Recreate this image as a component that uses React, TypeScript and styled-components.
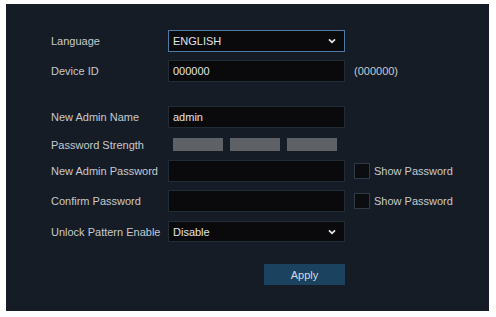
import React from "react";
import styled, { createGlobalStyle } from "styled-components";

const Global = createGlobalStyle`
  html, body { margin: 0; padding: 0; background: #ffffff; }
  body { font-family: "Liberation Sans", Arial, sans-serif; }
`;

const Panel = styled.div`
  margin: 4px 0 0 6px;
  width: 483px;
  height: 307px;
  background: #151c25;
  box-sizing: border-box;
  padding: 26px 0 0 45px;
  display: flex;
  flex-direction: column;
`;

const Row = styled.div<{ $top: number; $h?: number }>`
  display: flex;
  align-items: center;
  margin-top: ${(p) => p.$top}px;
  height: ${(p) => p.$h ?? 22}px;
`;

const Label = styled.div`
  width: 117px;
  font-size: 11px;
  color: #c6cacf;
  white-space: nowrap;
`;

const Field = styled.div<{ $focus?: boolean }>`
  width: 177px;
  height: 100%;
  box-sizing: border-box;
  background: #0a0a0c;
  border: 1px solid ${(p) => (p.$focus ? "#4d7ba6" : "#222c37")};
  display: flex;
  align-items: center;
  justify-content: space-between;
  padding: 0 8px 0 4px;
  font-size: 11px;
  color: #e0e3e6;
`;

const Chevron = () => (
  <svg width="8" height="6" viewBox="0 0 8 6">
    <path d="M1 1.3 L4 4.3 L7 1.3" fill="none" stroke="#e2e5e8" strokeWidth="1.8" />
  </svg>
);

const Side = styled.div`
  margin-left: 9px;
  font-size: 11px;
  color: #c6cacf;
  display: flex;
  align-items: center;
  gap: 4px;
`;

const Check = styled.div`
  width: 16px;
  height: 16px;
  box-sizing: border-box;
  background: #0b0d10;
  border: 1px solid #2f3a46;
`;

const Bars = styled.div`
  width: 177px;
  height: 100%;
  display: flex;
  gap: 7px;
  padding-left: 5px;
  box-sizing: border-box;
`;

const Bar = styled.div`
  width: 50px;
  height: 100%;
  background: #5e6165;
`;

const Apply = styled.button`
  margin-left: 213px;
  width: 81px;
  height: 21px;
  border: none;
  background: #1b425f;
  color: #d3dae2;
  font-family: "Liberation Sans", Arial, sans-serif;
  font-size: 11px;
  padding: 0;
`;

const ApplyRow = styled.div`
  margin-top: 22px;
  display: flex;
`;

export default function App() {
  return (
    <>
      <Global />
      <Panel>
        <Row $top={0}>
          <Label>Language</Label>
          <Field $focus>
            <span>ENGLISH</span>
            <Chevron />
          </Field>
        </Row>
        <Row $top={8}>
          <Label>Device ID</Label>
          <Field>
            <span>000000</span>
          </Field>
          <Side>(000000)</Side>
        </Row>
        <Row $top={24}>
          <Label>New Admin Name</Label>
          <Field>
            <span>admin</span>
          </Field>
        </Row>
        <Row $top={10} $h={13}>
          <Label>Password Strength</Label>
          <Bars>
            <Bar />
            <Bar />
            <Bar />
          </Bars>
        </Row>
        <Row $top={9}>
          <Label>New Admin Password</Label>
          <Field />
          <Side>
            <Check />
            Show Password
          </Side>
        </Row>
        <Row $top={8}>
          <Label>Confirm Password</Label>
          <Field />
          <Side>
            <Check />
            Show Password
          </Side>
        </Row>
        <Row $top={9} $h={21}>
          <Label>Unlock Pattern Enable</Label>
          <Field>
            <span>Disable</span>
            <Chevron />
          </Field>
        </Row>
        <ApplyRow>
          <Apply>Apply</Apply>
        </ApplyRow>
      </Panel>
    </>
  );
}
